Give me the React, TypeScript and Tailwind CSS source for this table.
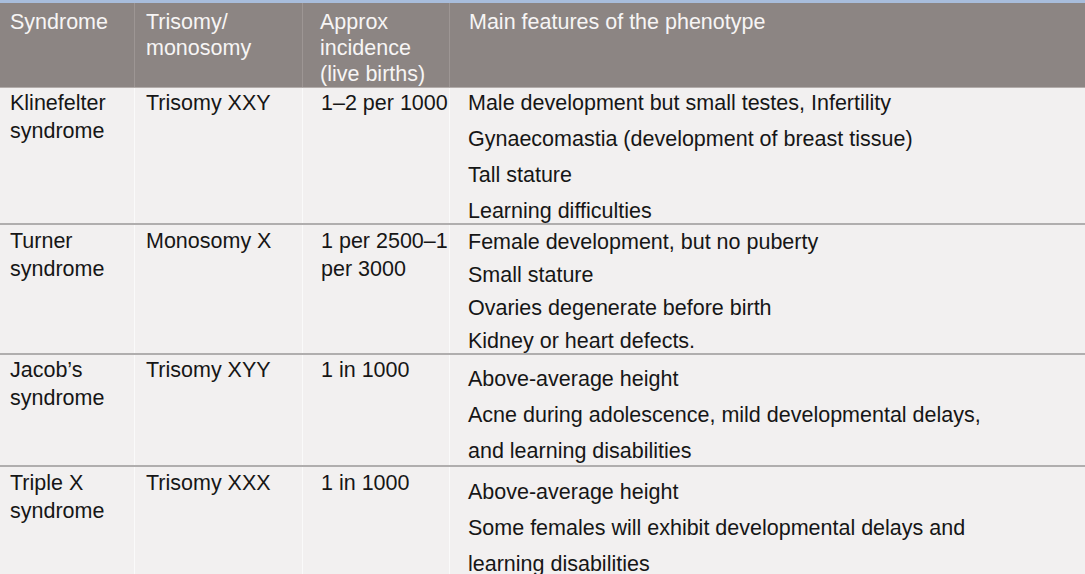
import React from 'react';

type Row = {
  syndrome: string[];
  karyotype: string;
  incidence: string[];
  features: string[];
  height: string;
  featPad: string;
  featGap: string;
  cellPad: string;
};

const ROWS: Row[] = [
  {
    syndrome: ['Klinefelter', 'syndrome'],
    karyotype: 'Trisomy XXY',
    incidence: ['1–2 per 1000'],
    features: [
      'Male development but small testes, Infertility',
      'Gynaecomastia (development of breast tissue)',
      'Tall stature',
      'Learning difficulties',
    ],
    height: 'h-[135px]',
    featPad: 'pt-[1px]',
    featGap: 'gap-[8px]',
    cellPad: 'pt-[1px]',
  },
  {
    syndrome: ['Turner', 'syndrome'],
    karyotype: 'Monosomy X',
    incidence: ['1 per 2500–1', 'per 3000'],
    features: [
      'Female development, but no puberty',
      'Small stature',
      'Ovaries degenerate before birth',
      'Kidney or heart defects.',
    ],
    height: 'h-[130px]',
    featPad: 'pt-[3px]',
    featGap: 'gap-[5px]',
    cellPad: 'pt-[2px]',
  },
  {
    syndrome: ['Jacob’s', 'syndrome'],
    karyotype: 'Trisomy XYY',
    incidence: ['1 in 1000'],
    features: [
      'Above-average height',
      'Acne during adolescence, mild developmental delays,',
      'and learning disabilities',
    ],
    height: 'h-[112px]',
    featPad: 'pt-[10px]',
    featGap: 'gap-[8px]',
    cellPad: 'pt-[1px]',
  },
  {
    syndrome: ['Triple X', 'syndrome'],
    karyotype: 'Trisomy XXX',
    incidence: ['1 in 1000'],
    features: [
      'Above-average height',
      'Some females will exhibit developmental delays and',
      'learning disabilities',
    ],
    height: 'h-[130px]',
    featPad: 'pt-[11px]',
    featGap: 'gap-[8px]',
    cellPad: 'pt-[2px]',
  },
];

const App: React.FC = () => {
  return (
    <div
      className="w-[1085px] h-[574px] overflow-hidden bg-[#f2f0f0] text-[21.5px] text-[#161616]"
      style={{ fontFamily: '"Liberation Sans", Arial, sans-serif' }}
    >
      {/* top accent */}
      <div className="h-[3px] bg-[#a8bddc]" />

      {/* Header */}
      <div className="flex h-[85px] bg-[#8c8583] text-[#f7f5f5] leading-[26px] border-b border-[#b3adab]">
        <div className="w-[135px] pl-[10px] pt-[6px] border-r border-[#9d9694]">Syndrome</div>
        <div className="w-[168px] pl-[11px] pt-[6px] border-r border-[#9d9694]">
          <div>Trisomy/</div>
          <div>monosomy</div>
        </div>
        <div className="w-[147px] pl-[17px] pt-[6px] border-r border-[#9d9694]">
          <div>Approx</div>
          <div>incidence</div>
          <div>(live births)</div>
        </div>
        <div className="flex-1 pl-[19px] pt-[6px]">Main features of the phenotype</div>
      </div>

      {/* Body rows */}
      {ROWS.map((r, i) => (
        <div
          key={i}
          className={`flex ${r.height} leading-[28px] ${i > 0 ? 'border-t-2 border-[#b0aeae]' : ''}`}
        >
          <div className={`w-[135px] pl-[10px] ${r.cellPad} border-r border-[#fafafa]`}>
            {r.syndrome.map((s) => (
              <div key={s}>{s}</div>
            ))}
          </div>
          <div className={`w-[168px] pl-[11px] ${r.cellPad} border-r border-[#fafafa] whitespace-nowrap`}>
            {r.karyotype}
          </div>
          <div className={`w-[147px] pl-[18px] ${r.cellPad} border-r border-[#fafafa] whitespace-nowrap`}>
            {r.incidence.map((s) => (
              <div key={s}>{s}</div>
            ))}
          </div>
          <div className={`flex-1 flex flex-col pl-[18px] ${r.featPad} ${r.featGap} whitespace-nowrap`}>
            {r.features.map((f) => (
              <div key={f}>{f}</div>
            ))}
          </div>
        </div>
      ))}
    </div>
  );
};

export default App;
